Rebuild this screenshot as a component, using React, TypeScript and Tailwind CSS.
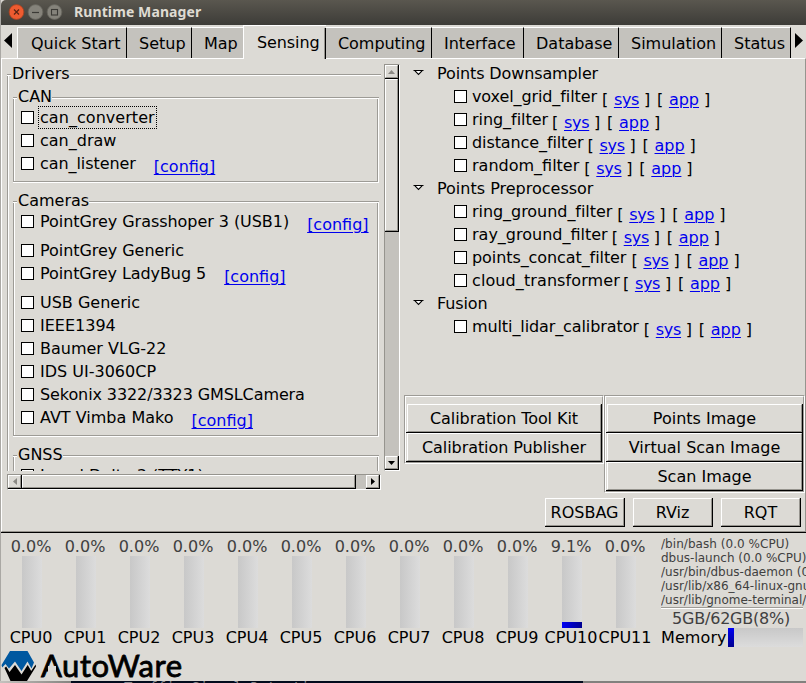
import type { ReactNode } from "react";

const TABS = [
  { label: "Quick Start", box: "w-[110px] pl-[13px] border-l border-l-white" },
  { label: "Setup", box: "w-[65px] pl-[12px]" },
  { label: "Map", box: "w-[51px] pl-[12px] border-r-0" },
  { label: "Sensing", box: "w-[83px] pl-[13px] tracking-[-0.1px]", active: true },
  { label: "Computing", box: "w-[106px] pl-[12px] tracking-[-0.05px]" },
  { label: "Interface", box: "w-[92px] pl-[12px]" },
  { label: "Database", box: "w-[95px] pl-[12px]" },
  { label: "Simulation", box: "w-[103px] pl-[12px]" },
  { label: "Status", box: "w-[69px] pl-[12px]" },
];

interface Driver {
  label: string;
  text?: string;
  link?: string;
  focus?: boolean;
}

const CAN: Driver[] = [
  { label: "can_converter", focus: true, text: "tracking-[0.05px]" },
  { label: "can_draw" },
  { label: "can_listener", text: "tracking-[-0.07px]", link: "ml-[18px]" },
];

const CAMERAS: Driver[] = [
  { label: "PointGrey Grasshoper 3 (USB1)", text: "tracking-[-0.05px]", link: "ml-[18px]" },
  { label: "PointGrey Generic", text: "tracking-[-0.05px]" },
  { label: "PointGrey LadyBug 5", text: "tracking-[-0.08px]", link: "ml-[18px]" },
  { label: "USB Generic" },
  { label: "IEEE1394" },
  { label: "Baumer VLG-22" },
  { label: "IDS UI-3060CP" },
  { label: "Sekonix 3322/3323 GMSLCamera", text: "tracking-[-0.1px]" },
  { label: "AVT Vimba Mako", link: "ml-[18px]" },
];

const TREE = [
  {
    label: "Points Downsampler",
    text: "tracking-[-0.12px]",
    items: [
      { label: "voxel_grid_filter", text: "tracking-[-0.1px]", link: "ml-[5px]" },
      { label: "ring_filter", text: "tracking-[-0.05px]", link: "ml-[4px]" },
      { label: "distance_filter", text: "tracking-[-0.1px]", link: "ml-[4px]" },
      { label: "random_filter", text: "", link: "ml-[5px]" },
    ],
  },
  {
    label: "Points Preprocessor",
    text: "",
    items: [
      { label: "ring_ground_filter", text: "tracking-[-0.05px]", link: "ml-[5px]" },
      { label: "ray_ground_filter", text: "", link: "ml-[4px]" },
      { label: "points_concat_filter", text: "tracking-[-0.08px]", link: "ml-[5px]" },
      { label: "cloud_transformer", text: "tracking-[0.1px]", link: "ml-[3px]" },
    ],
  },
  {
    label: "Fusion",
    text: "tracking-[-0.1px]",
    items: [{ label: "multi_lidar_calibrator", text: "tracking-[-0.1px]", link: "ml-[5px]" }],
  },
];

const CPUS = [0, 0, 0, 0, 0, 0, 0, 0, 0, 0, 9.1, 0];

const PROCESSES = [
  "/bin/bash (0.0 %CPU)",
  "dbus-launch (0.0 %CPU)",
  "/usr/bin/dbus-daemon (0.0 %CPU)",
  "/usr/lib/x86_64-linux-gnu/",
  "/usr/lib/gnome-terminal/gnome",
];

function TitleBar() {
  return (
    <header className="flex h-[25px] shrink-0 items-center rounded-tl-[5px] bg-gradient-to-b from-[#5a574f] to-[#3d3c38] pl-[7px]">
      <svg width="58" height="18" viewBox="0 0 58 18" className="-mt-[2px] shrink-0">
        <circle cx="8.5" cy="9" r="7.4" fill="#ee5b30" stroke="#a5401f" strokeWidth="0.8" />
        <path d="M6 6.5l5 5M11 6.5l-5 5" stroke="#5b2413" strokeWidth="1.2" />
        <circle cx="27.5" cy="9" r="7.4" fill="#85837b" stroke="#65635c" strokeWidth="0.8" />
        <path d="M24 9.5h7" stroke="#3b3a36" strokeWidth="1.2" />
        <circle cx="46.5" cy="9" r="7.4" fill="#85837b" stroke="#65635c" strokeWidth="0.8" />
        <rect x="43.5" y="6.5" width="6" height="5.5" fill="none" stroke="#3b3a36" strokeWidth="1.1" />
      </svg>
      <h1 className="ml-[8px] -mt-[1px] font-['Noto_Sans',sans-serif] text-[14px] leading-[20px] font-bold tracking-[0.1px] text-[#dfdbd2]">
        Runtime Manager
      </h1>
    </header>
  );
}

function TabBar() {
  return (
    <nav className="flex h-[33px] shrink-0">
      <div className="flex w-[16px] shrink-0 pt-[8px] pl-[3px]">
        <svg width="9" height="16" viewBox="0 0 9 16"><path d="M8 0v15L0 7.5z" fill="#000" /></svg>
      </div>
      {TABS.map((t) =>
        t.active ? (
          <div key={t.label} className={`relative z-10 h-[34px] shrink-0 border-t border-l border-white bg-[#dcdad5] pt-[7px] ${t.box}`}>
            {t.label}
            <div className="absolute top-[2px] right-0 h-[31px] w-[2px] border-r border-l border-r-black border-l-[#96948e]" />
          </div>
        ) : (
          <div key={t.label} className={`mt-[2px] h-[31px] shrink-0 border-t border-r border-t-white border-r-black bg-[#c4c2bd] pt-[6px] ${t.box}`}>
            {t.label}
          </div>
        ),
      )}
      <div className="flex flex-1 pt-[8px] pl-[4px]">
        <svg width="9" height="16" viewBox="0 0 9 16"><path d="M0 0v15l8-7.5z" fill="#000" /></svg>
      </div>
    </nav>
  );
}

function Checkbox() {
  return <span className="h-[13px] w-[13px] shrink-0 border border-black bg-white" />;
}

function Link({ children }: { children: ReactNode }) {
  return <a className="text-[#0000ee] underline decoration-1 underline-offset-2">{children}</a>;
}

function DriverRow({ label, text = "", link, focus }: Driver) {
  return (
    <div className={`flex shrink-0 items-start pl-[6px] whitespace-nowrap ${link ? "h-[29px]" : "h-[23px]"}`}>
      <span className="flex pt-[4px]"><Checkbox /></span>
      <span className={`mt-[1px] ml-[6px] ${text} ${focus ? "w-[115px] outline-1 outline-offset-1 outline-dotted outline-black" : ""}`}>{label}</span>
      {link && <span className={`mt-[4px] ${link}`}><Link>[config]</Link></span>}
    </div>
  );
}

function Group({ title, className, children }: { title: string; className: string; children: ReactNode }) {
  return (
    <section className={`flex shrink-0 flex-col ${className}`}>
      <div className="z-10 flex h-[20px] shrink-0 items-start">
        <span className="mt-[10px] h-[2px] w-[4px] border-t border-b border-t-[#9d9b96] border-b-white" />
        <span className="ml-[1px] whitespace-nowrap">{title}</span>
        <span className="mt-[10px] h-[2px] flex-1 border-t border-b border-t-[#9d9b96] border-b-white" />
      </div>
      <div className="-mt-[10px] flex min-h-0 flex-1 flex-col border-r border-b border-white">
        <div className="flex min-h-0 flex-1 flex-col border-x border-b border-[#9d9b96]">
          <div className="min-h-0 flex-1 border-l border-white pt-[10px]">{children}</div>
        </div>
      </div>
    </section>
  );
}

function Bevel({ className, children }: { className: string; children?: ReactNode }) {
  return (
    <div className={`flex shrink-0 border-r border-b border-black ${className}`}>
      <div className="flex flex-1 items-center justify-center border-t border-r border-b border-l border-t-white border-r-[#96948e] border-b-[#96948e] border-l-white bg-[#dcdad5]">
        {children}
      </div>
    </div>
  );
}

function VerticalScrollbar() {
  return (
    <div className="flex h-[407px] w-[16px] flex-col justify-between border border-t-[#96948e] border-r-white border-b-white border-l-[#96948e] bg-[#c4c2bd]">
      <div className="flex flex-col">
        <Bevel className="h-[14px] w-[14px]">
          <svg width="7" height="4" viewBox="0 0 7 4"><path d="M3.5 0L7 4H0z" fill="#8b8984" /></svg>
        </Bevel>
        <Bevel className="h-[153px] w-[14px]" />
      </div>
      <Bevel className="h-[14px] w-[14px]">
        <svg width="7" height="4" viewBox="0 0 7 4"><path d="M0 0h7L3.5 4z" fill="#000" /></svg>
      </Bevel>
    </div>
  );
}

function HorizontalScrollbar() {
  return (
    <div className="mt-[3px] flex h-[16px] w-[374px] shrink-0 justify-between border border-t-[#96948e] border-r-white border-b-white border-l-[#96948e] bg-[#c4c2bd]">
      <div className="flex">
        <Bevel className="h-[14px] w-[14px]">
          <svg width="4" height="7" viewBox="0 0 4 7"><path d="M4 0v7L0 3.5z" fill="#8b8984" /></svg>
        </Bevel>
        <Bevel className="h-[14px] w-[334px]" />
      </div>
      <Bevel className="h-[14px] w-[14px]">
        <svg width="4" height="7" viewBox="0 0 4 7"><path d="M0 0v7l4-3.5z" fill="#000" /></svg>
      </Bevel>
    </div>
  );
}

function Drivers() {
  return (
    <div className="flex w-[374px] shrink-0 flex-col">
      <div className="h-[407px] w-[374px] shrink-0 overflow-hidden">
        <Group title="Drivers" className="h-[520px] w-[400px]">
          <div className="flex w-[366px] flex-col gap-[8px] pt-[3px] pl-[4px]">
            <Group title="CAN" className="h-[96px] w-[366px]">
              {CAN.map((r) => <DriverRow key={r.label} {...r} />)}
            </Group>
            <Group title="Cameras" className="h-[246px] w-[366px]">
              {CAMERAS.map((r) => <DriverRow key={r.label} {...r} />)}
            </Group>
            <Group title="GNSS" className="h-[80px] w-[366px]">
              <DriverRow label="Javad Delta 3 (TTY1)" />
            </Group>
          </div>
        </Group>
      </div>
      <HorizontalScrollbar />
    </div>
  );
}

function Tree() {
  return (
    <div className="-mt-[1px] flex flex-col pl-[9px]">
      {TREE.map((g) => (
        <div key={g.label}>
          <div className="flex h-[23px] items-start">
            <svg width="11" height="7" viewBox="0 0 11 7" className="mt-[6px]">
              <path d="M0.5 1.5h10M2 1.8l3.5 3.7L9 1.8" fill="#fff" stroke="#000" strokeWidth="1.1" />
            </svg>
            <span className={`mt-[1px] ml-[13px] ${g.text}`}>{g.label}</span>
          </div>
          {g.items.map((item) => (
            <div key={item.label} className="flex h-[23px] items-start pl-[41px] whitespace-nowrap">
              <span className="flex pt-[4px]"><Checkbox /></span>
              <span className={`mt-[1px] ml-[5px] ${item.text}`}>{item.label}</span>
              <span className={`mt-[4px] flex ${item.link}`}>
                <span className="w-[12px]">[</span>
                <span className="w-[30px] tracking-[-0.3px]"><Link>sys</Link></span>
                <span className="w-[13px]">]</span>
                <span className="w-[12px]">[</span>
                <span className="w-[35px]"><Link>app</Link></span>
                <span>]</span>
              </span>
            </div>
          ))}
        </div>
      ))}
    </div>
  );
}

function ButtonBox({ labels, className }: { labels: string[]; className: string }) {
  return (
    <div className={`flex shrink-0 flex-col border border-t-[#9d9b96] border-r-white border-b-white border-l-[#9d9b96] ${className}`}>
      <div className="flex flex-1 flex-col border border-t-white border-r-[#9d9b96] border-b-[#9d9b96] border-l-white pt-[7px]">
        {labels.map((l) => <Bevel key={l} className="h-[29px] pl-px">{l}</Bevel>)}
      </div>
    </div>
  );
}

function CpuMeter({ index, value }: { index: number; value: number }) {
  return (
    <div className="flex w-[54px] shrink-0 flex-col items-center whitespace-nowrap">
      <span className="mr-[2px] h-[19px] text-[#404040]">{value.toFixed(1)}%</span>
      <div className="flex h-[72px] w-[20px] flex-col justify-end bg-gradient-to-r from-[#c8c8c8] to-[#dcdcdc]">
        <div className="bg-gradient-to-r from-[#0000f5] to-[#000090]" style={{ height: Math.floor(value * 0.72) }} />
      </div>
      <span className="mr-[2px]">{`CPU${index}`}</span>
    </div>
  );
}

function Logo() {
  return (
    <div className="flex h-[30px] items-start pl-px">
      <svg width="36" height="30" viewBox="0 0 36 30" className="-ml-px shrink-0">
        <path d="M9 0H26.5L33 11.5 30.5 17.5 26.5 10.5 20.5 20 14 10.5 8 17.5 4.5 13 1.2 16.5 0.5 14z" fill="#0058a0" />
        <path d="M3.5 17L5.2 15.5 8.5 21 14 14 20.5 23.5 26.7 14 30.2 20 34.6 13.5 35 15.5 26 30H9.5z" fill="#000" />
      </svg>
      <div className="relative ml-[4px] h-[30px] w-[145px]">
        <span className="-mt-[3px] block h-[32px] font-['Lato',sans-serif] text-[31px] leading-[34px] font-normal tracking-[0.5px] [-webkit-text-stroke:0.8px_#000]">AutoWare</span>
        <span className="absolute top-[15px] left-[7px] h-[6px] w-[8px] bg-[#dcdad5]" />
      </div>
    </div>
  );
}

export default function App() {
  return (
    <div className="flex h-[683px] w-[806px] flex-col overflow-hidden bg-[#dcdad5] font-['DejaVu_Sans',sans-serif] text-[16px] leading-[19px] text-black">
      <div className="flex h-[681px] shrink-0 flex-col border-l border-[#aaa8a4]">
        <TitleBar />
        <TabBar />
        <main className="flex h-[475px] shrink-0 flex-col border-b border-black">
          <div className="flex flex-1 flex-col border border-t-white border-r-[#96948e] border-b-[#96948e] border-l-white pt-[5px] pl-[5px]">
            <div className="flex h-[434px]">
              <Drivers />
              <div className="ml-[3px]"><VerticalScrollbar /></div>
              <div className="ml-[4px] flex flex-col">
                <div className="h-[331px]"><Tree /></div>
                <div className="flex items-start">
                  <ButtonBox labels={["Calibration Tool Kit", "Calibration Publisher"]} className="h-[69px] w-[200px] tracking-[-0.08px]" />
                  <ButtonBox labels={["Points Image", "Virtual Scan Image", "Scan Image"]} className="h-[98px] w-[201px]" />
                </div>
              </div>
            </div>
            <div className="flex justify-end gap-[8px] pr-[4px]">
              {["ROSBAG", "RViz", "RQT"].map((l) => <Bevel key={l} className="h-[29px] w-[80px]">{l}</Bevel>)}
            </div>
          </div>
        </main>
        <section className="flex h-[118px] shrink-0 pt-[4px] pl-[4px]">
          {CPUS.map((v, i) => <CpuMeter key={i} index={i} value={v} />)}
          <div className="ml-[8px] flex w-[146px] flex-col overflow-hidden whitespace-nowrap">
            <div className="h-[70px] text-[12px] leading-[14px] text-[#404040]">
              {PROCESSES.map((p, i) => <div key={p} className={i === 0 ? "tracking-[0.05px]" : ""}>{p}</div>)}
            </div>
            <div className="h-[2px] w-[142px] shrink-0 border-t border-b border-t-[#9d9b96] border-b-white" />
            <div className="w-[142px] pl-[11px] tracking-[-0.2px] text-[#404040]">5GB/62GB(8%)</div>
            <div className="flex">
              <span className="w-[67px] tracking-[0.1px]">Memory</span>
              <div className="h-[19px] w-[75px] bg-gradient-to-b from-[#c8c8c8] to-[#dcdcdc]">
                <div className="h-[19px] w-[6px] bg-gradient-to-b from-[#0000f5] to-[#000090]" />
              </div>
            </div>
          </div>
        </section>
        <Logo />
      </div>
      <footer className="flex h-[2px] shrink-0 overflow-hidden">
        <div className="w-[71px] bg-gradient-to-r from-[#c4c2be] to-[#858480]" />
        <div className="w-[512px] overflow-hidden bg-[#020b1d] pl-[53px] font-['DejaVu_Sans_Mono',monospace] text-[14px] leading-[14px] whitespace-nowrap text-[#8a8c90]">
          <div className="-mt-[1px]">Traffic Signal Detection</div>
        </div>
        <div className="flex-1 bg-[#82817e]" />
      </footer>
    </div>
  );
}
